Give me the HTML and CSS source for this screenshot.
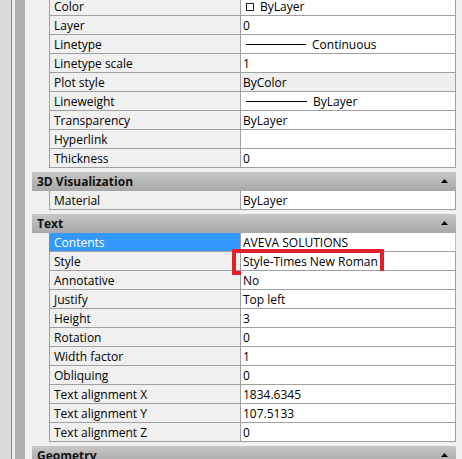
FILE: index.html
```html
<!DOCTYPE html>
<html>
<head>
<meta charset="utf-8">
<link rel="stylesheet" href="styles.css">
</head>
<body>
<div class="palette">
  <div class="strip s1"></div>
  <div class="strip s2"></div>
  <div class="strip s3"></div>
  <div class="strip s4"></div>
  <div class="strip s5"></div>
  <div class="panel">
    <section class="group first">
      <div class="rows">
        <div class="row"><div class="name">Color</div><div class="val"><span class="swatch"></span>ByLayer</div></div>
        <div class="row"><div class="name">Layer</div><div class="val">0</div></div>
        <div class="row"><div class="name">Linetype</div><div class="val"><span class="ltline"></span>Continuous</div></div>
        <div class="row"><div class="name">Linetype scale</div><div class="val">1</div></div>
        <div class="row"><div class="name">Plot style</div><div class="val hover">ByColor</div></div>
        <div class="row"><div class="name">Lineweight</div><div class="val"><span class="ltline lw"></span>ByLayer</div></div>
        <div class="row"><div class="name">Transparency</div><div class="val">ByLayer</div></div>
        <div class="row"><div class="name">Hyperlink</div><div class="val"></div></div>
        <div class="row"><div class="name">Thickness</div><div class="val">0</div></div>
      </div>
    </section>
    <section class="group">
      <div class="head"><span>3D Visualization</span><svg class="arrow" width="7" height="4" viewBox="0 0 7 4"><polygon points="0,4 7,4 3.5,0" fill="#000"/></svg></div>
      <div class="rows">
        <div class="row"><div class="name">Material</div><div class="val">ByLayer</div></div>
      </div>
    </section>
    <section class="group">
      <div class="head"><span>Text</span><svg class="arrow" width="7" height="4" viewBox="0 0 7 4"><polygon points="0,4 7,4 3.5,0" fill="#000"/></svg></div>
      <div class="rows">
        <div class="row sel"><div class="name">Contents</div><div class="val">AVEVA SOLUTIONS</div></div>
        <div class="row"><div class="name">Style</div><div class="val mark">Style-Times New Roman<span class="redbox"></span></div></div>
        <div class="row"><div class="name">Annotative</div><div class="val">No</div></div>
        <div class="row"><div class="name">Justify</div><div class="val">Top left</div></div>
        <div class="row"><div class="name">Height</div><div class="val">3</div></div>
        <div class="row"><div class="name">Rotation</div><div class="val">0</div></div>
        <div class="row"><div class="name">Width factor</div><div class="val">1</div></div>
        <div class="row"><div class="name">Obliquing</div><div class="val">0</div></div>
        <div class="row"><div class="name">Text alignment X</div><div class="val">1834.6345</div></div>
        <div class="row"><div class="name">Text alignment Y</div><div class="val">107.5133</div></div>
        <div class="row"><div class="name">Text alignment Z</div><div class="val">0</div></div>
      </div>
    </section>
    <section class="group">
      <div class="head"><span>Geometry</span><svg class="arrow" width="7" height="4" viewBox="0 0 7 4"><polygon points="0,4 7,4 3.5,0" fill="#000"/></svg></div>
    </section>
  </div>
</div>
</body>
</html>
```
FILE: styles.css
```css
html, body {
  margin: 0;
  padding: 0;
  background: #f0f0f0;
  overflow: hidden;
}
body {
  font-family: "Open Sans", "Noto Sans", sans-serif;
  font-size: 12px;
  color: #000;
}
.palette {
  display: flex;
  height: 459px;
  overflow: hidden;
}
.strip { flex: none; height: 100%; }
.s1 { width: 11px; background: #dadada; }
.s2 { width: 1px; background: #8c8c8c; }
.s3 { width: 3px; background: #ececec; }
.s4 { width: 10px; background: #afafaf; }
.s5 { width: 7px; background: #f0f0f0; }
.panel {
  flex: none;
  width: 424px;
  display: flex;
  flex-direction: column;
  gap: 4px;
  margin-top: -3px;
}
.group { display: flex; flex-direction: column; }
.head {
  height: 19px;
  display: flex;
  align-items: center;
  justify-content: space-between;
  padding: 1px 8px 0 5px;
  background: linear-gradient(#c6c6c6, #a8a8a8);
  font-weight: bold;
  color: #111;
  box-sizing: border-box;
}
.head span { line-height: 18px; }
.arrow { margin-top: -2px; }
.rows {
  margin-left: 17px;
  display: flex;
  flex-direction: column;
}
.row {
  display: grid;
  grid-template-columns: 192px 215px;
  height: 19px;
  box-sizing: border-box;
}
.name, .val {
  border-bottom: 1px solid #a0a0a0;
  line-height: 16px;
  padding-top: 2px;
  white-space: nowrap;
  box-sizing: border-box;
  height: 19px;
  display: flex;
  align-items: center;
}
.name {
  background: #f0f0f0;
  border-left: 1px solid #a0a0a0;
  border-right: 1px solid #a0a0a0;
  padding-left: 4px;
}
.val {
  background: #fff;
  border-right: 1px solid #a0a0a0;
  padding-left: 2px;
  position: relative;
}
.val.hover { background: #efefef; }
.sel .name {
  background: #3399ff;
  color: #fff;
  border-left-color: #3399ff;
}
.sel .val { border-right-color: #99c9f5; }
.swatch {
  width: 6px;
  height: 6px;
  border: 1px solid #222;
  margin: -1px 6px 0 3px;
  flex: none;
}
.ltline {
  width: 60px;
  height: 1px;
  background: #000;
  margin: -1px 6px 0 3px;
  flex: none;
}
.ltline.lw { width: 61px; }
.redbox {
  position: absolute;
  left: -9px;
  top: -3px;
  width: 152px;
  height: 26px;
  border: 4px solid #e3202a;
  box-sizing: border-box;
}
```
